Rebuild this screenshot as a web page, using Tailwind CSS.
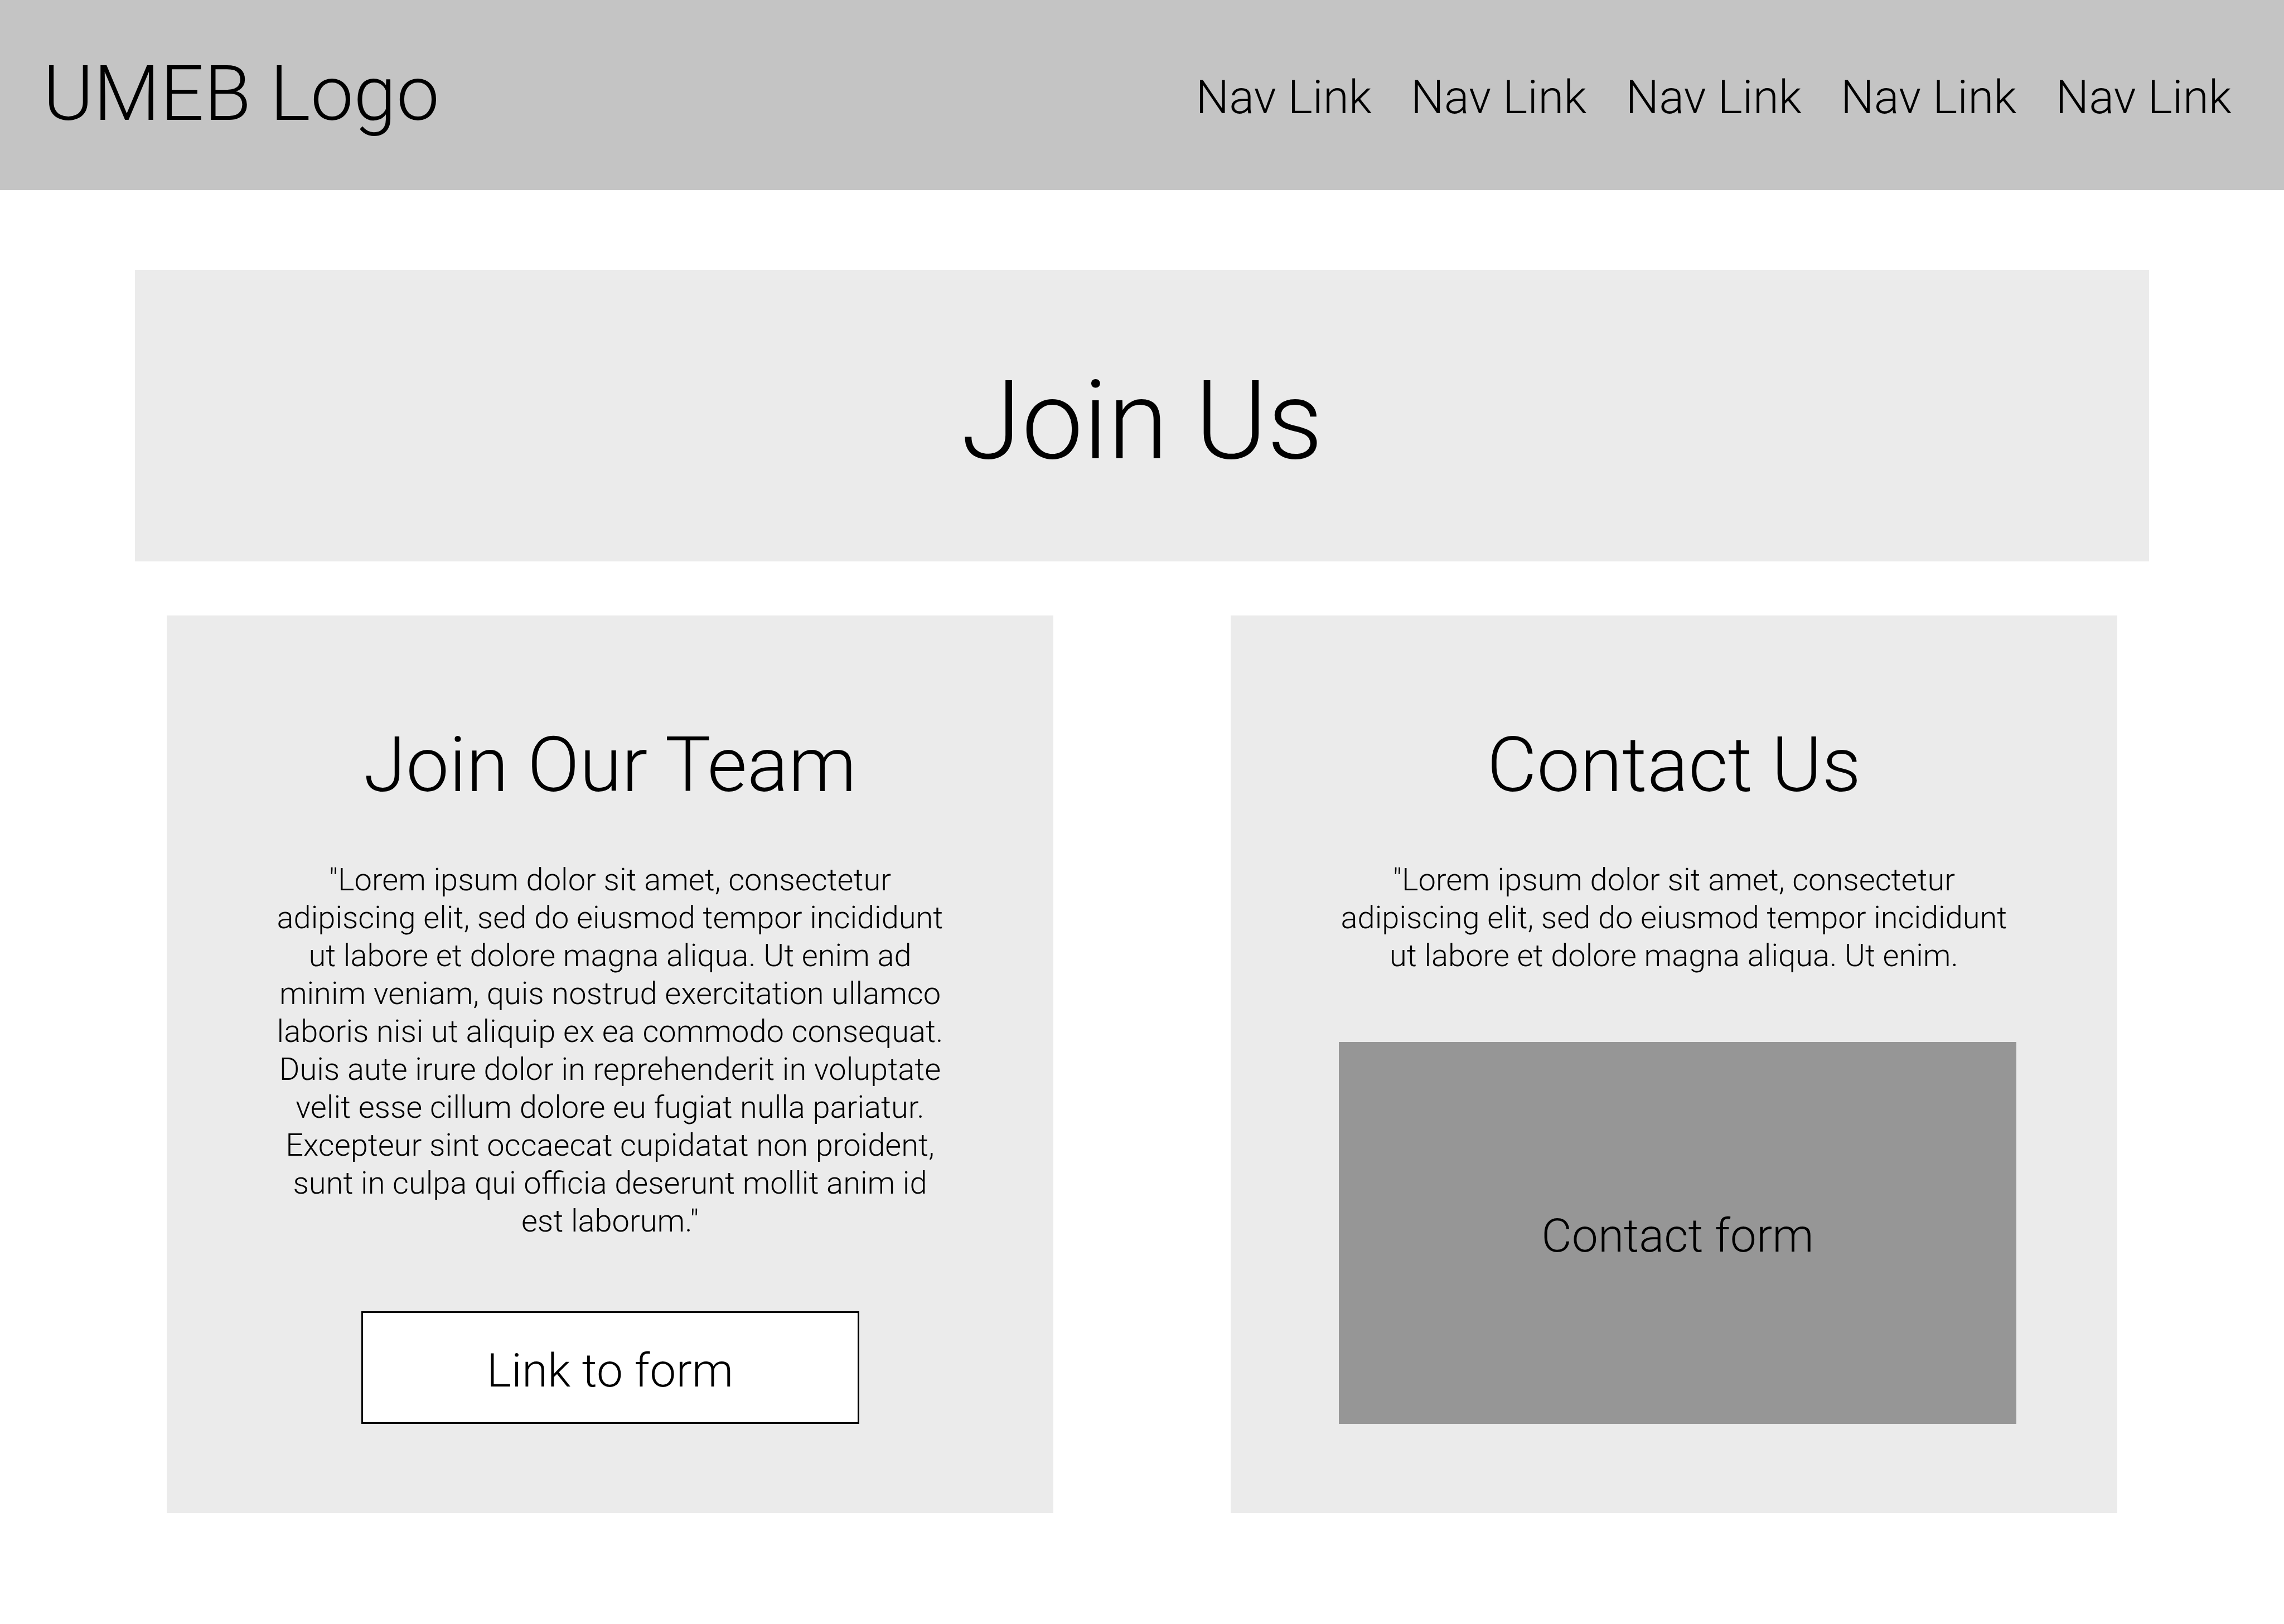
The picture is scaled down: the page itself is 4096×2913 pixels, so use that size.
<!DOCTYPE html>
<html lang="en">
<head>
<meta charset="utf-8">
<meta name="viewport" content="width=device-width, initial-scale=1">
<title>UMEB - Join Us</title>
<script src="https://cdn.jsdelivr.net/npm/@tailwindcss/browser@4"></script>
</head>
<body class="bg-white font-['Roboto',sans-serif] font-light text-black">
  <header class="flex items-center justify-between bg-[#c4c4c4] pt-[86px] pr-[94px] pb-[90px] pl-[77px]">
    <a href="#" class="text-[138px] leading-[165px] whitespace-nowrap">UMEB Logo</a>
    <nav class="flex gap-[70px] pt-3 text-[84px] leading-[100px] whitespace-nowrap">
      <a href="#">Nav Link</a>
      <a href="#">Nav Link</a>
      <a href="#">Nav Link</a>
      <a href="#">Nav Link</a>
      <a href="#">Nav Link</a>
    </nav>
  </header>

  <main class="pt-[143px] pb-[199px]">
    <section class="mx-[242px] bg-[#ebebeb] pt-[153px] pb-[134px] text-center">
      <h1 class="text-[197px] leading-[236px]">Join Us</h1>
    </section>

    <div class="mx-[299px] mt-[97px] grid grid-cols-2 gap-[318px] text-center">
      <section class="flex flex-col items-center bg-[#ebebeb] pt-[184px] pb-[160px]">
        <h2 class="text-[138px] leading-[168px]">Join Our Team</h2>
        <p class="mt-[88px] text-[56px] leading-[68px] whitespace-nowrap">"Lorem ipsum dolor sit amet, consectetur<br>
          adipiscing elit, sed do eiusmod tempor incididunt<br>
          ut labore et dolore magna aliqua. Ut enim ad<br>
          minim veniam, quis nostrud exercitation ullamco<br>
          laboris nisi ut aliquip ex ea commodo consequat.<br>
          Duis aute irure dolor in reprehenderit in voluptate<br>
          velit esse cillum dolore eu fugiat nulla pariatur.<br>
          Excepteur sint occaecat cupidatat non proident,<br>
          sunt in culpa qui officia deserunt mollit anim id<br>
          est laborum."</p>
        <a href="#" class="mt-[128px] w-[893px] border-3 border-black bg-white pt-[54px] pb-[42px] text-[84px] leading-[100px]">Link to form</a>
      </section>

      <section class="flex flex-col bg-[#ebebeb] pt-[184px] pb-[160px]">
        <h2 class="text-[138px] leading-[168px]">Contact Us</h2>
        <p class="mt-[88px] text-[56px] leading-[68px] whitespace-nowrap">"Lorem ipsum dolor sit amet, consectetur<br>
          adipiscing elit, sed do eiusmod tempor incididunt<br>
          ut labore et dolore magna aliqua. Ut enim.</p>
        <div class="mt-[121px] mr-[181px] ml-[194px] flex grow items-center justify-center bg-[#969696] pt-[11px] text-[84px] leading-[100px]">Contact form</div>
      </section>
    </div>
  </main>
</body>
</html>
